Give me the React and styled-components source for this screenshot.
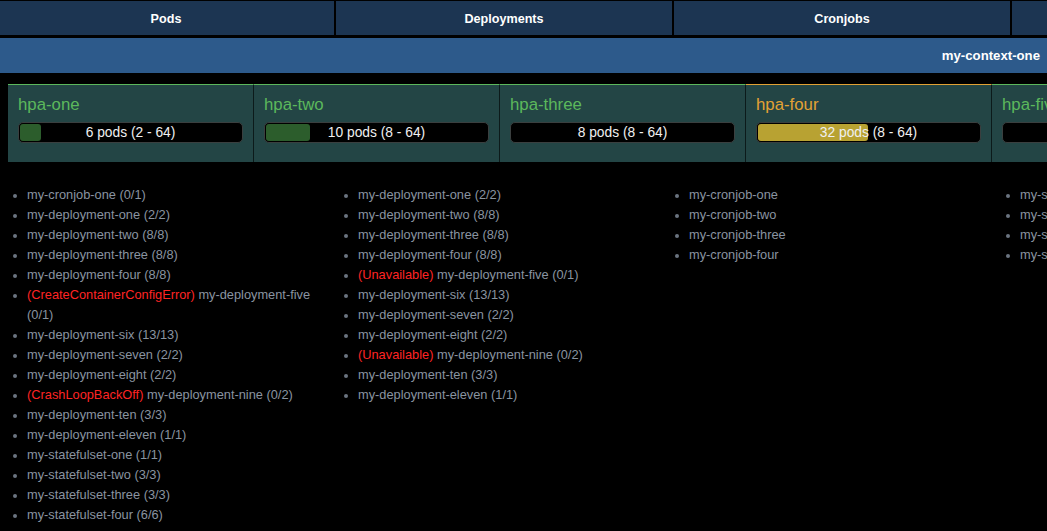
import React from "react";
import styled, { createGlobalStyle } from "styled-components";

const GlobalStyle = createGlobalStyle`
	html, body {
		margin: 0;
		padding: 0;
		background: #000;
		overflow: hidden;
	}
	body {
		font-family: "Liberation Sans", Arial, Helvetica, sans-serif;
	}
`;

const Colors = {
	tab: "#1c3552",
	context: "#2d5a8b",
	card: "#234545",
	ok: "#5cb85c",
	warn: "#e2a234",
	okFill: "#2c5d2c",
	warnFill: "#b8a232",
	text: "#8a94a0",
	error: "#ff2424"
};

const Root = styled.div`
	width: 100%;
	overflow: hidden;
`;

const Tabs = styled.nav`
	display: flex;
	gap: 2px;
	padding-top: 1px;
	margin-left: -2px;
	background: #000;
`;

const Tab = styled.div`
	flex: 0 0 336px;
	height: 34px;
	display: flex;
	align-items: center;
	justify-content: center;
	padding-top: 1px;
	box-sizing: border-box;
	background: ${Colors.tab};
	color: #fff;
	font-size: 12.6px;
	font-weight: bold;
`;

const ContextBar = styled.div`
	margin-top: 3px;
	height: 35px;
	display: flex;
	align-items: center;
	justify-content: flex-end;
	padding: 0 7px;
	background: ${Colors.context};
	color: #fff;
	font-size: 13.2px;
	font-weight: bold;
`;

const HpaRow = styled.div`
	display: flex;
	margin-top: 11px;
	padding-left: 8px;
`;

const HpaCard = styled.div`
	flex: 0 0 246px;
	box-sizing: border-box;
	height: 78px;
	padding: 10px 0 0 10px;
	background: ${Colors.card};
	border-top: 1px solid ${props => (props.warn ? Colors.warn : Colors.ok)};
	border-right: 1px solid #0c1a1a;
`;

const HpaTitle = styled.div`
	color: ${props => (props.warn ? Colors.warn : Colors.ok)};
	font-size: 16.8px;
	line-height: 20px;
	margin-bottom: 7px;
`;

const Bar = styled.div`
	position: relative;
	width: 225px;
	height: 21px;
	box-sizing: border-box;
	background: #000;
	border: 1px solid #3a3f3f;
	border-radius: 5px;
`;

const BarFill = styled.div`
	position: absolute;
	left: 1px;
	top: 1px;
	bottom: 1px;
	border-radius: 3px;
	background: ${props => (props.warn ? Colors.warnFill : Colors.okFill)};
`;

const BarLabel = styled.div`
	position: absolute;
	inset: 0;
	display: flex;
	align-items: center;
	justify-content: center;
	color: #f0f0f0;
	font-size: 13.8px;
`;

const Columns = styled.div`
	display: flex;
	margin-top: 23px;
	padding-left: 8px;
`;

const Column = styled.ul`
	flex: 0 0 331px;
	box-sizing: border-box;
	margin: 0;
	padding: 0 20px 0 19px;
	list-style: disc;
	color: ${Colors.text};
	font-size: 12.8px;
	line-height: 20px;
`;

const Item = styled.li`
	&::marker {
		color: #6b7480;
		font-size: 12px;
	}
`;

const Reason = styled.span`
	color: ${Colors.error};
`;

const hpas = [
	{ name: "hpa-one", label: "6 pods (2 - 64)", fill: 21 },
	{ name: "hpa-two", label: "10 pods (8 - 64)", fill: 44 },
	{ name: "hpa-three", label: "8 pods (8 - 64)", fill: 0 },
	{ name: "hpa-four", label: "32 pods (8 - 64)", fill: 110, warn: true },
	{ name: "hpa-five", label: "8 pods (8 - 64)", fill: 0 }
];

const columns = [
	[
		["my-cronjob-one (0/1)"],
		["my-deployment-one (2/2)"],
		["my-deployment-two (8/8)"],
		["my-deployment-three (8/8)"],
		["my-deployment-four (8/8)"],
		["my-deployment-five (0/1)", "CreateContainerConfigError"],
		["my-deployment-six (13/13)"],
		["my-deployment-seven (2/2)"],
		["my-deployment-eight (2/2)"],
		["my-deployment-nine (0/2)", "CrashLoopBackOff"],
		["my-deployment-ten (3/3)"],
		["my-deployment-eleven (1/1)"],
		["my-statefulset-one (1/1)"],
		["my-statefulset-two (3/3)"],
		["my-statefulset-three (3/3)"],
		["my-statefulset-four (6/6)"]
	],
	[
		["my-deployment-one (2/2)"],
		["my-deployment-two (8/8)"],
		["my-deployment-three (8/8)"],
		["my-deployment-four (8/8)"],
		["my-deployment-five (0/1)", "Unavailable"],
		["my-deployment-six (13/13)"],
		["my-deployment-seven (2/2)"],
		["my-deployment-eight (2/2)"],
		["my-deployment-nine (0/2)", "Unavailable"],
		["my-deployment-ten (3/3)"],
		["my-deployment-eleven (1/1)"]
	],
	[["my-cronjob-one"], ["my-cronjob-two"], ["my-cronjob-three"], ["my-cronjob-four"]],
	[
		["my-statefulset-one (1/1)"],
		["my-statefulset-two (3/3)"],
		["my-statefulset-three (3/3)"],
		["my-statefulset-four (6/6)"]
	]
];

const App = () => (
	<Root>
		<GlobalStyle />
		<Tabs>
			<Tab>Pods</Tab>
			<Tab>Deployments</Tab>
			<Tab>Cronjobs</Tab>
			<Tab>Statefulsets</Tab>
		</Tabs>
		<ContextBar>my-context-one</ContextBar>
		<HpaRow>
			{hpas.map(hpa => (
				<HpaCard key={hpa.name} warn={hpa.warn}>
					<HpaTitle warn={hpa.warn}>{hpa.name}</HpaTitle>
					<Bar>
						{hpa.fill > 0 && <BarFill warn={hpa.warn} style={{ width: hpa.fill }} />}
						<BarLabel>{hpa.label}</BarLabel>
					</Bar>
				</HpaCard>
			))}
		</HpaRow>
		<Columns>
			{columns.map((items, i) => (
				<Column key={i}>
					{items.map(([name, reason]) => (
						<Item key={name}>
							{reason && <Reason>({reason}) </Reason>}
							{name}
						</Item>
					))}
				</Column>
			))}
		</Columns>
	</Root>
);

export default App;
